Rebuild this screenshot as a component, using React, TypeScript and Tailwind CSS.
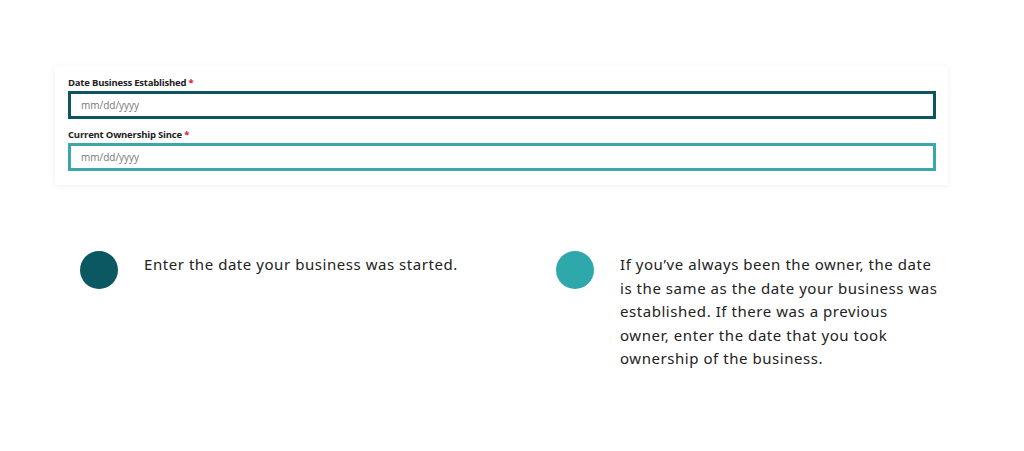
import React from 'react';

const fields = [
  { label: 'Date Business Established', border: 'border-[#0d5660]' },
  { label: 'Current Ownership Since', border: 'border-[#3aa8aa]' },
];

const notes = [
  { color: 'bg-[#0b5862]', text: 'Enter the date your business was started.' },
  {
    color: 'bg-[#2ea8ab]',
    text:
      "If you’ve always been the owner, the date is the same as the date your business was established. If there was a previous owner, enter the date that you took ownership of the business.",
  },
];

export default function App() {
  return (
    <div className="w-[1024px] h-[451px] bg-white overflow-hidden">
      {/* form card */}
      <div className="ml-[55px] mt-[66px] w-[893px] h-[119px] bg-white shadow-[0_1px_6px_rgba(0,0,0,0.07)] px-[13px] pt-[10px]">
        {fields.map((f, i) => (
          <div key={f.label} className={i > 0 ? 'mt-[9px]' : ''}>
            <div className="h-[14px] text-[9.5px] leading-[14px] font-bold text-[#222] font-['Open_Sans',sans-serif] tracking-[-0.2px]">
              {f.label} <span className="text-[#d0203a]">*</span>
            </div>
            <div className={`mt-[1px] h-[28px] w-[868px] border-[3px] ${f.border} flex items-center pl-[10px]`}>
              <span className="text-[10px] text-[#777] font-['Open_Sans',sans-serif]">mm/dd/yyyy</span>
            </div>
          </div>
        ))}
      </div>

      {/* legend */}
      <div className="flex mt-[66px] ml-[80px]">
        {notes.map((n, i) => (
          <div key={i} className={`flex ${i === 0 ? 'w-[476px]' : 'w-[400px]'}`}>
            <div className={`w-[38px] h-[38px] rounded-full shrink-0 ${n.color}`} />
            <p className="ml-[26px] mt-[2px] w-[319px] text-[15px] leading-[23.5px] text-[#222] font-['Noto_Sans',sans-serif] tracking-[0.55px]">
              {n.text}
            </p>
          </div>
        ))}
      </div>
    </div>
  );
}
